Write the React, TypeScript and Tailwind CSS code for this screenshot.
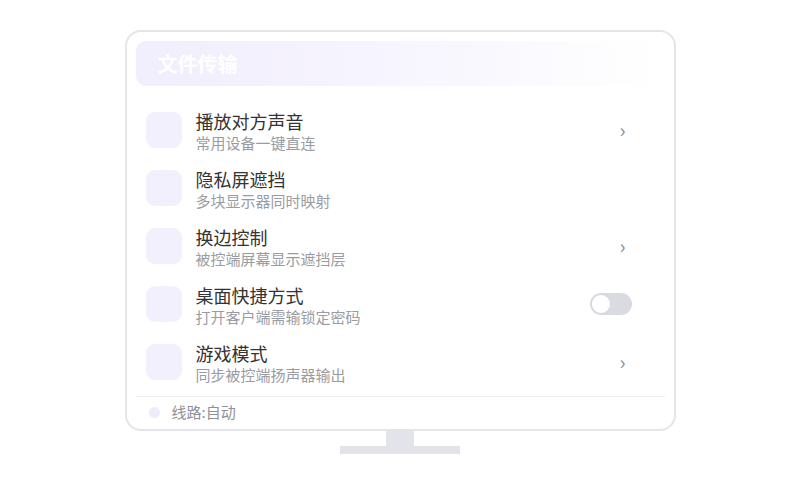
const rows = [
  { title: "播放对方声音", sub: "常用设备一键直连", right: "chevron" },
  { title: "隐私屏遮挡", sub: "多块显示器同时映射", right: "none" },
  { title: "换边控制", sub: "被控端屏幕显示遮挡层", right: "chevron" },
  { title: "桌面快捷方式", sub: "打开客户端需输锁定密码", right: "toggle" },
  { title: "游戏模式", sub: "同步被控端扬声器输出", right: "chevron" },
];

const Toggle = () => (
  <div className="w-[42px] h-[22px] rounded-full bg-[#d9dbe1] p-[2px] flex items-center">
    <div className="w-[18px] h-[18px] rounded-full bg-white" />
  </div>
);

const Row = ({ title, sub, right }: { title: string; sub: string; right: string }) => (
  <div className="flex items-center h-[58px] pl-[10px] pr-[33px] shrink-0">
    <div className="w-[36px] h-[36px] rounded-[9px] bg-[#f3f0fd] shrink-0" />
    <div className="ml-[14px] pt-[2px] flex flex-col flex-1">
      <span className="text-[18px] leading-[24px] text-[#333333]">{title}</span>
      <span className="text-[15px] leading-[20px] text-[#9a9ca3]">{sub}</span>
    </div>
    {right === "chevron" && (
      <span className="text-[20px] leading-none text-[#8a8d96] mr-[6px]">›</span>
    )}
    {right === "toggle" && <Toggle />}
  </div>
);

export default function App() {
  return (
    <div
      className="w-[800px] h-[500px] bg-white flex flex-col items-center pt-[30px]"
      style={{ fontFamily: '"Noto Sans CJK SC", "Noto Sans", sans-serif' }}
    >
      <div className="w-[551px] h-[401px] border-2 border-[#e3e5ea] rounded-[16px] px-[9px] pt-[9px] flex flex-col">
        <div className="h-[45px] shrink-0 rounded-[10px] bg-gradient-to-r from-[#f1eefd] via-[#f7f5fe] to-white flex items-center justify-between px-[22px]">
          <span className="text-white text-[20px] font-bold">文件传输</span>
          <span className="text-white text-[16px] font-bold opacity-80">传输</span>
        </div>
        <div className="mt-[15px] flex flex-col shrink-0">
          {rows.map((r) => (
            <Row key={r.title} {...r} />
          ))}
        </div>
        <div className="mt-[5px] border-t border-[#eceef2] flex items-center h-[32px] pl-[13px] shrink-0">
          <div className="w-[11px] h-[11px] rounded-full bg-[#eeebfc]" />
          <span className="ml-[12px] text-[15px] text-[#8f9198]">线路:自动</span>
        </div>
      </div>
      <div className="w-[28px] h-[15px] bg-[#e2e4e9]" />
      <div className="w-[120px] h-[8px] bg-[#e2e4e9]" />
    </div>
  );
}
